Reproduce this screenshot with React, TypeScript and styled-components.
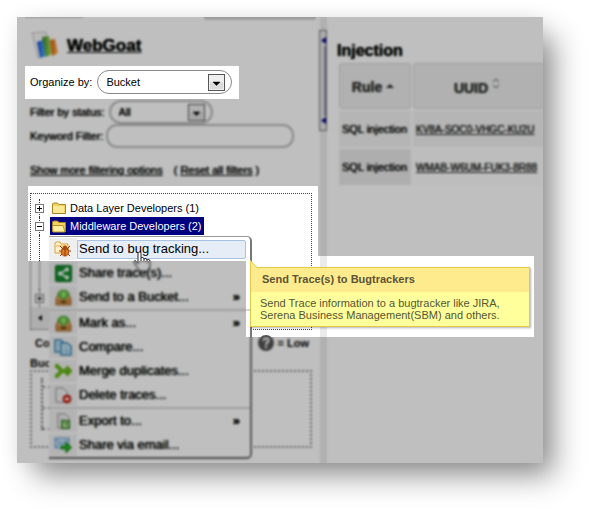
import React from "react";
import styled, { createGlobalStyle, css } from "styled-components";

const GlobalStyle = createGlobalStyle`
  * { box-sizing: border-box; }
  body {
    margin: 0;
    background: #fff;
    color: #000;
    font: 11px/14px "Liberation Sans", Arial, sans-serif;
  }
  button, input, select { font: inherit; color: inherit; }
`;

const heavyText = css`
  text-shadow: 0 0 1px currentColor;
`;

const Page = styled.div`
  padding: 17px 48px 48px 17px;
`;

const Frame = styled.main`
  position: relative;
  display: grid;
  grid-template-columns: 302px 8px minmax(0, 1fr);
  background: #fff;
  box-shadow: 14px 16px 28px -4px rgba(0, 0, 0, 0.45), 0 0 20px rgba(0, 0, 0, 0.06);
`;

/* Darkens and softens everything except the highlighted areas */
const Dim = styled.div`
  position: absolute;
  inset: 0;
  z-index: 10;
  pointer-events: none;
  background: rgba(0, 0, 0, 0.25);
  backdrop-filter: blur(1px);
  clip-path: polygon(
    evenodd,
    0 0, 100% 0, 100% 100%, 0 100%, 0 0,
    8px 49px, 222px 49px, 222px 82px, 8px 82px, 8px 49px,
    0 0,
    11px 169px, 301px 169px, 301px 239px, 517px 239px, 517px 320px,
    229px 320px, 229px 244px, 11px 244px, 11px 169px,
    0 0
  );
`;

const Sidebar = styled.section`
  padding: 0 7px 15px 13px;
`;

const TabEdge = styled.div`
  display: flex;
  justify-content: space-between;
  height: 3px;
  margin: 0 -4px 0 -5px;
  &::before { content: ""; width: 58px; height: 1px; background: #d0d0d0; }
  &::after { content: ""; width: 112px; background: #d0d0d0; border-radius: 0 0 4px 4px; }
`;

const Brand = styled.header`
  display: flex;
  align-items: center;
  gap: 7px;
  height: 50px;
  svg { flex: none; }
`;

const BrandLink = styled.a`
  padding-top: 2px;
  color: #000;
  font-size: 17px;
  font-weight: bold;
  line-height: 20px;
  ${heavyText}
`;

const Field = styled.div<{ $gap: number }>`
  display: flex;
  align-items: center;
  gap: ${(p) => p.$gap}px;
  height: 24px;
  label { flex: none; }
`;

const FieldGroup = styled.div`
  padding-top: 6px;
  label, select { ${heavyText} }
`;

const SelectBox = styled.span<{ $width: number; $thick?: boolean }>`
  display: grid;
  grid-template-columns: 1fr 17px 6px;
  align-items: center;
  width: ${(p) => p.$width}px;
  height: 24px;
  border: ${(p) => (p.$thick ? "2px solid #b8b8b8" : "1px solid #888")};
  border-radius: 12px;
  select {
    grid-area: 1 / 1 / 2 / 4;
    width: 100%;
    height: 20px;
    padding: 0 8px;
    border: 0;
    background: none;
    appearance: none;
  }
  svg { grid-area: 1 / 2; pointer-events: none; }
`;

const TextBox = styled.input`
  width: 188px;
  height: 24px;
  padding: 0 10px;
  border: 2px solid #b8b8b8;
  border-radius: 11px;
  background: none;
`;

const Links = styled.nav`
  display: flex;
  gap: 11px;
  padding: 15px 0 16px;
  ${heavyText}
  a { color: #000; }
`;

const Tree = styled.div`
  display: flex;
  flex-direction: column;
  height: 137px;
  padding-top: 5px;
  border: 1px dotted #444;
`;

const Branch = styled.div`
  position: relative;
  display: flex;
  align-items: center;
  height: 18px;
  padding-left: 4px;
  &::before {
    content: "";
    position: absolute;
    left: 8px;
    top: 0;
    height: 18px;
    border-left: 1px dotted #333;
  }
`;

const Toggle = styled.button`
  position: relative;
  width: 9px;
  height: 9px;
  margin-right: 6px;
  padding: 0;
  border: 1px solid #777;
  background: #fff;
  svg { display: block; }
`;

const Node = styled.span<{ $selected?: boolean }>`
  display: flex;
  align-items: center;
  gap: 4px;
  height: 18px;
  padding: 0 3px 0 2px;
  color: ${(p) => (p.$selected ? "#fff" : "#000")};
  background: ${(p) => (p.$selected ? "#000080" : "transparent")};
`;

const Trunk = styled.div`
  flex: 1;
  margin-left: 8px;
  border-left: 1px dotted #333;
`;

const Scroller = styled.button`
  display: flex;
  align-items: center;
  width: 40px;
  height: 22px;
  padding: 0 6px;
  border: 0;
  background: #e8e8e8;
`;

const Legend = styled.div`
  display: flex;
  align-items: center;
  justify-content: space-between;
  height: 24px;
  padding: 0 3px 0 5px;
  margin-top: 1px;
  font-weight: bold;
  span { display: flex; align-items: center; gap: 4px; }
`;

const Caption = styled.h3`
  margin: 1px 0 0;
  font: inherit;
  font-weight: bold;
`;

const BucketTree = styled.div`
  height: 78px;
  padding: 6px 9px 16px;
  border: 2px dotted #888;
`;

const Rungs = styled.div`
  display: flex;
  flex-direction: column;
  justify-content: space-between;
  height: 100%;
  width: 9px;
  border-left: 2px dotted #666;
  i { border-top: 2px dotted #888; }
  i:first-child { margin-top: 8px; }
`;

const Splitter = styled.div`
  padding-top: 13px;
  background: linear-gradient(90deg, #fff 1px, #ebebeb 1px);
`;

const Grip = styled.button`
  display: flex;
  flex-direction: column;
  align-items: flex-end;
  justify-content: space-between;
  width: 8px;
  height: 101px;
  padding: 6px 0;
  border: 1px solid #777;
  background: linear-gradient(#8c8cb0, #8c8cb0) 4px 15px / 2px 70px no-repeat #e4e4e4;
`;

const Results = styled.section`
  overflow: hidden;
  padding: 25px 0 0 10px;
  h2 { margin: 0; font-size: 16px; line-height: 18px; ${heavyText} }
`;

const Table = styled.table`
  width: 210px;
  margin-top: 1px;
  table-layout: fixed;
  border-spacing: 2px;
  ${heavyText}
  th {
    height: 46px;
    padding: 2px 4px 0 0;
    border: 1px solid #d4d4d4;
    border-radius: 3px;
    background: #ececec;
    color: #333;
    font-size: 14px;
    line-height: 16px;
  }
  th svg { margin-left: 4px; vertical-align: 4px; }
  td { height: 36px; padding: 0 0 0 3px; background: #f2f2f2; white-space: nowrap; }
  tr:last-child td { background: #e9e9e9; }
  tr:last-child td:last-child { background: #fcfcfc; }
  a { color: #222; font-size: 10px; }
`;

const Menu = styled.div`
  position: absolute;
  left: 32px;
  top: 219px;
  width: 203px;
  border-top: 1px solid #999;
  border-right: 2px solid #777;
  border-bottom: 2px solid #666;
  border-radius: 0 5px 5px 0;
  background: #fff;
`;

const Item = styled.button`
  display: grid;
  grid-template-columns: 28px 1fr;
  align-items: center;
  width: 100%;
  height: 24px;
  padding: 0;
  border: 0;
  background: none;
  font-size: 13px;
  line-height: 16px;
  text-align: left;
`;

const IconCell = styled.span`
  display: grid;
  place-items: center;
  height: 22px;
  background: #f0efef;
`;

const ItemLabel = styled.span<{ $active?: boolean }>`
  display: flex;
  justify-content: space-between;
  height: 19px;
  margin-right: 4px;
  padding: 0 5px 0 1px;
  border: 1px solid ${(p) => (p.$active ? "#a6c3e6" : "transparent")};
  border-radius: 0 2px 2px 0;
  background: ${(p) => (p.$active ? "#e6edf6" : "none")};
  ${(p) => !p.$active && heavyText}
`;

const Rule = styled.hr`
  height: 2px;
  margin: 0;
  border: 0;
  background: #d5d5d5;
`;

const Tip = styled.aside`
  position: absolute;
  left: 233px;
  top: 250px;
  width: 280px;
  border: 1px solid #e3c94a;
  background: #ffff9c;
  color: #555530;
  line-height: 12px;
  box-shadow: 1px 1px 2px rgba(0, 0, 0, 0.3);
  h4 { margin: 0; padding: 5px 11px 7px; background: #feeb8e; color: #5c5335; font-size: 11px; }
  p { margin: 0; padding: 5px 9px; }
  svg { position: absolute; left: -1px; top: -8px; }
`;

const Pointer = styled.svg`
  position: absolute;
  left: 115px;
  top: 234px;
`;

const DropArrow = () => (
  <svg width="17" height="17" aria-hidden="true">
    <rect x=".5" y=".5" width="16" height="16" fill="#eee" stroke="#555" />
    <rect x="2" y="8" width="13" height="7" fill="#dcdcdc" />
    <path d="M5 8h7L8.500 11.500z" fill="#000" stroke="#000" strokeWidth=".5" />
  </svg>
);

const Folder = ({ open }: { open?: boolean }) => (
  <svg width="14" height="13" viewBox="0 0 14 13" aria-hidden="true">
    <path d="M.5 11.500V2l1-1h4l1.500 1.500h6.500v9z" fill="#f3d35e" stroke="#a98522" />
    {open ? (
      <path d="M1 12 .5 5.500h10.500L13 12z" fill="#fff0a0" stroke="#b69128" />
    ) : (
      <path d="M1 4h11v7H1z" fill="#fbe897" />
    )}
  </svg>
);

const Logo = () => (
  <svg width="30" height="30" viewBox="0 0 30 30" aria-hidden="true">
    <defs>
      <linearGradient id="blue"><stop stopColor="#1c45d8" /><stop offset="1" stopColor="#51b9f2" /></linearGradient>
      <linearGradient id="green"><stop stopColor="#278529" /><stop offset="1" stopColor="#b7df55" /></linearGradient>
      <linearGradient id="orange"><stop stopColor="#d35b0b" /><stop offset="1" stopColor="#ffb052" /></linearGradient>
    </defs>
    <path d="m2 3 14-1 3 23-11 3z" fill="#f5f5f5" stroke="#aaa" strokeDasharray="2 1" />
    <path d="m7 12 6-2 3 16-6 2z" fill="url(#blue)" />
    <path d="m12 7 7-1 3 18-6 3z" fill="url(#green)" />
    <path d="m20 10 5-1 3 14-6 3z" fill="url(#orange)" />
  </svg>
);

const ShareIcon = () => (
  <svg width="17" height="17" viewBox="0 0 17 17" aria-hidden="true">
    <rect x=".5" y=".5" width="16" height="16" rx="1" fill="#148a2c" stroke="#07691b" />
    <path d="M12 4.500 5 8.500l7 4" fill="none" stroke="#fff" strokeWidth="1.500" />
    <g fill="#fff"><circle cx="12" cy="4.500" r="2" /><circle cx="5" cy="8.500" r="2" /><circle cx="12" cy="12.500" r="2" /></g>
  </svg>
);

const BucketIcon = () => (
  <svg width="17" height="17" viewBox="0 0 17 17" aria-hidden="true">
    <path d="m3 6-2 4v6h15v-6l-2-4z" fill="#dba45a" stroke="#916028" />
    <path d="M1.500 10.500h14v5h-14z" fill="#c48742" />
    <path d="M6 12h5v2H6z" fill="#5e3614" />
    <path d="M3 5c0-5 11-5 11 0v1l-5.500 5L3 6z" fill="#6fc84c" stroke="#3a8a28" />
    <path d="M8.500 3v5" stroke="#b4ef8c" strokeWidth="2" />
  </svg>
);

const CompareIcon = () => (
  <svg width="18" height="17" viewBox="0 0 18 17" aria-hidden="true">
    <g fill="#c6e4f4" stroke="#3985b0" strokeWidth="1.500">
      <path d="M1 1h6l3 3v9H1z" />
      <path d="M7 4h6l4 3v9H7z" />
    </g>
    <path d="M3 4h3M3 7h2M3 10h2M10 8h3M10 11h5M10 13h5" stroke="#77afce" />
  </svg>
);

const MergeIcon = () => (
  <svg width="18" height="14" viewBox="0 0 18 14" fill="none" stroke="#67b51d" strokeWidth="4" aria-hidden="true">
    <path d="M1 2h2l5 5h8M1 12h2l5-5M12 3l4 4-4 4" />
  </svg>
);

const Sheet = () => <path d="M2 1h7l4 4v10H2z" fill="#f8f8f8" stroke="#888" />;

const DeleteIcon = () => (
  <svg width="18" height="17" viewBox="0 0 18 17" aria-hidden="true">
    <Sheet /><path d="M5 3v10M8 3v10" stroke="#ddd" />
    <circle cx="13" cy="12" r="4" fill="#da2f20" stroke="#a71a12" />
    <path d="M11 12h4" stroke="#fff" strokeWidth="2" />
  </svg>
);

const ExportIcon = () => (
  <svg width="18" height="17" viewBox="0 0 18 17" aria-hidden="true">
    <g transform="translate(2 0)"><Sheet /></g>
    <path d="M7 3v5M10 4v4" stroke="#bbb" />
    <rect x="7.500" y="7.500" width="8" height="8" fill="#5fae42" stroke="#2d7122" />
    <path d="M9 9h5v5H9z" fill="#c7eaa8" /><path d="m10 10 3 3v-3z" fill="#2d7122" />
  </svg>
);

const MailIcon = () => (
  <svg width="18" height="16" viewBox="0 0 18 16" aria-hidden="true">
    <path d="M1 1h14v10H1z" fill="#c4dff6" stroke="#6698ca" />
    <path d="m1 2 7 5 7-5M1 11l5-5m9 5-5-5" fill="none" stroke="#6698ca" />
    <path d="M7 9h5V5l5.500 5.500-5.500 5.500v-4H7z" fill="#26af25" stroke="#168315" />
  </svg>
);

const BugIcon = () => (
  <svg width="18" height="16" viewBox="0 0 18 16" aria-hidden="true">
    <path d="M1 12V2l1-1h4l1 2h7v9z" fill="#fff1c9" stroke="#dda13a" />
    <path d="M2 5h11" stroke="#e4ad4d" />
    <path d="m6 5 3 3m7-3-3 3M5 10h12M6 15l3-3m7 3-3-3" stroke="#8b3b0b" />
    <ellipse cx="11" cy="10.500" rx="3.500" ry="4.500" fill="#e57b20" stroke="#a34a0b" />
    <path d="M8 8h6M11 8v7" stroke="#8b3b0b" />
    <circle cx="11" cy="6.500" r="2" fill="#a34a0b" />
  </svg>
);

const actions = [
  { label: "Send to bug tracking...", Icon: BugIcon, active: true },
  { label: "Share trace(s)...", Icon: ShareIcon },
  { label: "Send to a Bucket...", Icon: BucketIcon, sub: true, ruled: true },
  { label: "Mark as...", Icon: BucketIcon, sub: true },
  { label: "Compare...", Icon: CompareIcon },
  { label: "Merge duplicates...", Icon: MergeIcon },
  { label: "Delete traces...", Icon: DeleteIcon, ruled: true },
  { label: "Export to...", Icon: ExportIcon, sub: true },
  { label: "Share via email...", Icon: MailIcon },
];

const Expander = ({ open, name }: { open?: boolean; name: string }) => (
  <Toggle aria-label={name}>
    <svg width="7" height="7" stroke="#000"><path d={open ? "M1 3.500h5" : "M1 3.500h5M3.500 1v5"} /></svg>
  </Toggle>
);

const rows = ["KV8A-SOC0-VHGC-KU2U", "WMAB-W6UM-FUK3-8R88"];

export default function App() {
  return (
    <Page>
      <GlobalStyle />
      <Frame>
        <Sidebar>
          <TabEdge />
          <Brand><Logo /><BrandLink href="#webgoat">WebGoat</BrandLink></Brand>
          <Field $gap={5}>
            <label htmlFor="organize">Organize by:</label>
            <SelectBox $width={135}>
              <select id="organize"><option>Bucket</option></select>
              <DropArrow />
            </SelectBox>
          </Field>
          <FieldGroup>
            <Field $gap={4}>
              <label htmlFor="status">Filter by status:</label>
              <SelectBox $width={104} $thick>
                <select id="status"><option>All</option></select>
                <DropArrow />
              </SelectBox>
            </Field>
            <Field $gap={3}>
              <label htmlFor="keyword">Keyword Filter:</label>
              <TextBox id="keyword" />
            </Field>
          </FieldGroup>
          <Links>
            <a href="#more">Show more filtering options</a>
            <span>( <a href="#reset">Reset all filters</a> )</span>
          </Links>
          <Tree>
            <Branch><Expander name="Expand" /><Node><Folder />Data Layer Developers (1)</Node></Branch>
            <Branch><Expander open name="Collapse" /><Node $selected><Folder open />Middleware Developers (2)</Node></Branch>
            <Trunk />
            <Branch><Expander name="Expand group" /></Branch>
            <Scroller aria-label="Scroll left">
              <svg width="6" height="8"><path d="M5 1v6L1 4z" /></svg>
            </Scroller>
          </Tree>
          <Legend>
            Co
            <span>
              <svg width="16" height="16" viewBox="0 0 16 16" aria-hidden="true">
                <circle cx="8" cy="8" r="8" fill="#555" />
                <path d="M5.500 6c0-4 5-3 5-.5C10.500 7.500 8 7.500 8 10M8 11v2" fill="none" stroke="#fff" strokeWidth="2" />
              </svg>
              = Low
            </span>
          </Legend>
          <Caption>Buc</Caption>
          <BucketTree><Rungs><i /><i /><i /></Rungs></BucketTree>
        </Sidebar>
        <Splitter>
          <Grip aria-label="Resize panels">
            <svg width="5" height="7"><path d="M5 0v7L0 3.500z" fill="#0a0a90" /></svg>
            <svg width="5" height="7"><path d="M5 0v7L0 3.500z" fill="#0a0a90" /></svg>
          </Grip>
        </Splitter>
        <Results>
          <h2>Injection</h2>
          <Table>
            <colgroup><col width="72" /><col /></colgroup>
            <thead>
              <tr>
                <th>Rule<svg width="8" height="5"><path d="M0 5 4 1l4 4z" fill="#333" /></svg></th>
                <th>UUID<svg width="8" height="11" fill="none" stroke="#555"><path d="m1 4 3-3 3 3M1 7l3 3 3-3" /></svg></th>
              </tr>
            </thead>
            <tbody>
              {rows.map((id) => (
                <tr key={id}><td>SQL injection</td><td><a href={`#${id}`}>{id}</a></td></tr>
              ))}
            </tbody>
          </Table>
        </Results>
        <Menu role="menu">
          {actions.map(({ label, Icon, active, sub, ruled }) => (
            <React.Fragment key={label}>
              <Item role="menuitem">
                <IconCell><Icon /></IconCell>
                <ItemLabel $active={active}>{label}{sub && <b>»</b>}</ItemLabel>
              </Item>
              {ruled && <Rule />}
            </React.Fragment>
          ))}
        </Menu>
        <Tip role="tooltip">
          <h4>Send Trace(s) to Bugtrackers</h4>
          <p>Send Trace information to a bugtracker like JIRA, Serena Business Management(SBM) and others.</p>
          <svg width="10" height="9" aria-hidden="true"><path d="M0 0v9h9z" fill="#feeb8e" /><path d="M.5 9V1l7.500 7.500" fill="none" stroke="#e3c94a" /></svg>
        </Tip>
        <Pointer width="20" height="21" viewBox="0 0 20 21" aria-hidden="true">
          <path
            d="M6 13V2.500c0-2 3-2 3 0V7c1-1 3-.5 3 1 1-1 3-.5 3 1 1-1 3-.5 3 1v5l-2 5H8L2 12c-1-2 1-3 2-2z"
            fill="#fff" stroke="#222"
          />
          <path d="M9 7v4M12 8v3M15 9v3" stroke="#222" />
        </Pointer>
        <Dim />
      </Frame>
    </Page>
  );
}
